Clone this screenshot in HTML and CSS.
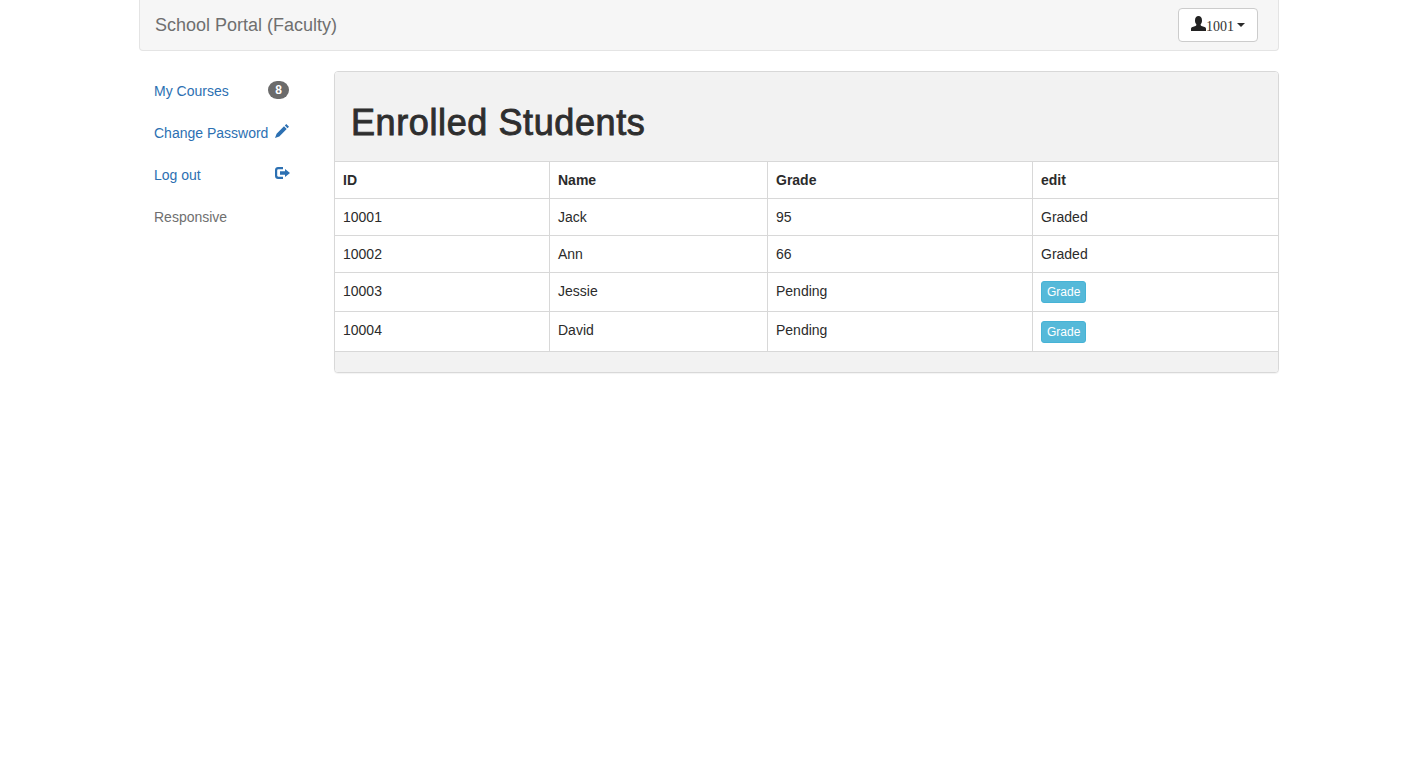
FILE: index.html
```html
<!DOCTYPE html>
<html lang="en">
<head>
<meta charset="utf-8">
<title>School Portal (Faculty)</title>
<link rel="stylesheet" href="styles.css">
</head>
<body>
<div class="container">
  <nav class="navbar">
    <a class="brand">School Portal (Faculty)</a>
    <button class="user-btn">
      <svg class="icon-user" viewBox="0 0 15 15"><path d="M0 15v-2c0-1 .5-1.500 1.500-1.900l3-1.100c.6-.2.9-.7.900-1.200 0-.4-.2-.7-.4-1C4.400 7 4 6 4 4.500 4 1.700 5.300 0 7.500 0S11 1.700 11 4.500C11 6 10.600 7 10 7.800c-.2.300-.4.600-.4 1 0 .5.300 1 .9 1.200l3 1.100c1 .4 1.500.9 1.500 1.900v2z"/></svg><span class="user-id">1001</span><span class="caret"></span>
    </button>
  </nav>
  <div class="row">
    <aside class="sidebar">
      <ul class="pills">
        <li><a class="pill link">My Courses<span class="badge">8</span></a></li>
        <li><a class="pill link">Change Password<svg class="side-icon pencil" viewBox="0 0 14 14"><path d="M11.300 0L14 2.700l-1.500 1.500-2.700-2.700zM9 2.300l2.700 2.700-7.400 7.400L0 14l1.600-4.300z"/></svg></a></li>
        <li><a class="pill link">Log out<svg class="side-icon logout" viewBox="0 0 15 12"><path d="M3 0h5v2.200H3.400c-.7 0-1.200.5-1.200 1.200v5.200c0 .7.500 1.200 1.200 1.200H8V12H3c-1.700 0-3-1.300-3-3V3c0-1.700 1.300-3 3-3z"/><path d="M10 2l5 4-5 4V7.700H5V4.300h5z"/></svg></a></li>
        <li><a class="pill muted">Responsive</a></li>
      </ul>
    </aside>
    <main class="content">
      <section class="panel">
        <header class="panel-heading"><h1>Enrolled Students</h1></header>
        <table class="students">
          <colgroup>
            <col class="col-id"><col class="col-name"><col class="col-grade"><col>
          </colgroup>
          <thead>
            <tr><th>ID</th><th>Name</th><th>Grade</th><th>edit</th></tr>
          </thead>
          <tbody>
            <tr><td>10001</td><td>Jack</td><td>95</td><td>Graded</td></tr>
            <tr><td>10002</td><td>Ann</td><td>66</td><td>Graded</td></tr>
            <tr><td>10003</td><td>Jessie</td><td>Pending</td><td><button class="grade-btn">Grade</button></td></tr>
            <tr><td>10004</td><td>David</td><td>Pending</td><td><button class="grade-btn">Grade</button></td></tr>
          </tbody>
        </table>
        <footer class="panel-footer"></footer>
      </section>
    </main>
  </div>
</div>
</body>
</html>
```

FILE: styles.css
```css
* { box-sizing: border-box; }

html, body { margin: 0; height: 100%; }

body {
  background: #fff;
  color: #2b2b2b;
  font-family: "Liberation Sans", Arial, sans-serif;
  font-size: 14px;
  line-height: 20px;
}

.container {
  width: 1170px;
  margin-left: 124px;
  padding: 0 15px;
}

.navbar {
  display: flex;
  align-items: center;
  justify-content: space-between;
  height: 51px;
  margin-bottom: 20px;
  padding: 0 20px 0 15px;
  background: #f6f6f6;
  border: 1px solid #e4e4e4;
  border-top: 0;
  border-radius: 0 0 4px 4px;
}

.brand {
  color: #6f6f6f;
  font-size: 18px;
}

.user-btn {
  display: flex;
  align-items: center;
  height: 34px;
  padding: 0 12px;
  background: #fff;
  border: 1px solid #ccc;
  border-radius: 4px;
  color: #333;
  font-family: "Liberation Serif", "Times New Roman", serif;
  font-size: 14px;
}

.icon-user { width: 15px; height: 15px; margin-top: -3px; fill: #222; }

.user-id { padding-top: 4px; }

.caret {
  width: 0;
  height: 0;
  margin-left: 3px;
  border-top: 4px solid #2b2b2b;
  border-left: 4px solid transparent;
  border-right: 4px solid transparent;
}

.row { display: flex; gap: 30px; }

.sidebar { width: 165px; flex: none; }

.pills { margin: 0; padding: 0; list-style: none; }

.pill {
  display: flex;
  align-items: center;
  justify-content: space-between;
  height: 40px;
  margin-bottom: 2px;
  padding: 0 15px;
}

.link { color: #2c70b2; }
.muted { color: #6f6f6f; }

.badge {
  min-width: 21px;
  padding: 3px 7px;
  margin-top: -2px;
  background: #6b6b6b;
  border-radius: 10px;
  color: #fff;
  font-size: 12px;
  font-weight: bold;
  line-height: 1;
  text-align: center;
}

.side-icon { flex: none; fill: #2c70b2; }
.pencil { width: 14px; height: 14px; margin-top: -4px; }
.logout { width: 15px; height: 12px; margin: -4px -1px 0 0; }

.content { flex: 1; min-width: 0; }

.panel {
  background: #fff;
  border: 1px solid #d8d8d8;
  border-radius: 4px;
  box-shadow: 0 1px 1px rgba(0, 0, 0, .05);
  overflow: hidden;
}

.panel-heading {
  height: 90px;
  padding: 31px 15px 0 16px;
  background: #f2f2f2;
  border-bottom: 1px solid #d8d8d8;
}

h1 {
  margin: 0;
  color: #2e2e2e;
  font-size: 36px;
  font-weight: 400;
  line-height: 40px;
  letter-spacing: .6px;
  -webkit-text-stroke: .9px #2e2e2e;
}

.students {
  width: 100%;
  border-collapse: collapse;
  table-layout: fixed;
}

.col-id { width: 214.500px; }
.col-name { width: 218px; }
.col-grade { width: 265px; }

.students th, .students td {
  height: 37px;
  padding: 8px;
  border: 1px solid #d8d8d8;
  border-top: 0;
  text-align: left;
  vertical-align: top;
}

.students th { height: 36px; padding-top: 8px; }

.students th:first-child, .students td:first-child { border-left: 0; }
.students th:last-child, .students td:last-child { border-right: 0; }

.grade-btn {
  display: block;
  height: 22px;
  padding: 0 5px;
  background: #55b9d9;
  border: 1px solid #46b3d6;
  border-radius: 3px;
  color: #fff;
  font-family: inherit;
  font-size: 12px;
  line-height: 18px;
}

.students tr:last-child .grade-btn { margin-top: 1px; }

.panel-footer {
  height: 20px;
  background: #f2f2f2;
}
```
